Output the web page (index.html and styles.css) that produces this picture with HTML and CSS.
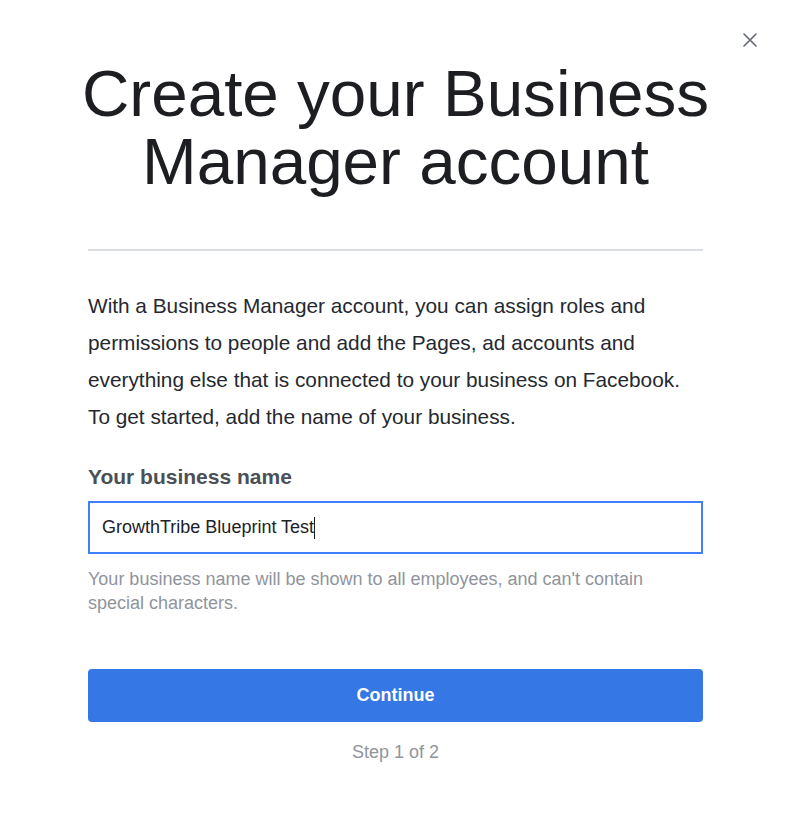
FILE: index.html
```html
<!DOCTYPE html>
<html lang="en">
<head>
<meta charset="utf-8">
<title>Create your Business Manager account</title>
<link rel="stylesheet" href="styles.css">
</head>
<body>
<div class="dialog">
  <button class="close" aria-label="Close">
    <svg width="16" height="16" viewBox="0 0 16 16"><path d="M2 2 L14 14 M14 2 L2 14" stroke="#606770" stroke-width="1.6" fill="none" stroke-linecap="round"/></svg>
  </button>
  <div class="content">
    <h1 class="title">Create your Business Manager account</h1>
    <hr class="divider">
    <p class="intro">With a Business Manager account, you can assign roles and permissions to people and add the Pages, ad accounts and everything else that is connected to your business on Facebook. To get started, add the name of your business.</p>
    <label class="label" for="bname">Your business name</label>
    <div class="input"><span class="value">GrowthTribe Blueprint Test</span><span class="caret"></span></div>
    <p class="help">Your business name will be shown to all employees, and can't contain special characters.</p>
    <button class="continue">Continue</button>
    <p class="step">Step 1 of 2</p>
  </div>
</div>
</body>
</html>
```

FILE: styles.css
```css
html, body {
  margin: 0;
  padding: 0;
  background: #ffffff;
}
body {
  font-family: "Liberation Sans", Arial, sans-serif;
  width: 791px;
  height: 825px;
  overflow: hidden;
}
.dialog {
  position: relative;
  width: 791px;
  height: 825px;
  box-sizing: border-box;
  padding: 0 88px;
}
.close {
  position: absolute;
  top: 32px;
  right: 33px;
  width: 16px;
  height: 16px;
  padding: 0;
  border: 0;
  background: none;
  display: flex;
}
.content {
  display: flex;
  flex-direction: column;
  padding-top: 60px;
}
.title {
  margin: 0 -10px;
  font-weight: normal;
  font-size: 65.6px;
  line-height: 68px;
  text-align: center;
  color: #1c1e21;
}
.divider {
  margin: 53px 0 0;
  border: 0;
  height: 2px;
  background: #dadde1;
}
.intro {
  margin: 36px 0 0;
  font-size: 20.8px;
  line-height: 37px;
  color: #25292f;
}
.label {
  margin-top: 30px;
  font-size: 21px;
  font-weight: bold;
  line-height: 24px;
  color: #4b4f56;
}
.input {
  margin-top: 12px;
  height: 53px;
  box-sizing: border-box;
  border: 2px solid #4080ff;
  display: flex;
  align-items: center;
  padding-left: 12px;
  font-size: 18px;
  color: #1d2129;
}
.caret {
  display: inline-block;
  width: 1px;
  height: 22px;
  background: #1d2129;
}
.help {
  margin: 13px 0 0;
  font-size: 18px;
  line-height: 24px;
  color: #90949c;
}
.continue {
  margin-top: 54px;
  height: 53px;
  border: 0;
  border-radius: 4px;
  background: #3578e5;
  color: #ffffff;
  font-family: "Liberation Sans", Arial, sans-serif;
  font-size: 18px;
  font-weight: bold;
}
.step {
  margin: 18px 0 0;
  text-align: center;
  font-size: 18px;
  line-height: 24px;
  color: #90949c;
}
```
